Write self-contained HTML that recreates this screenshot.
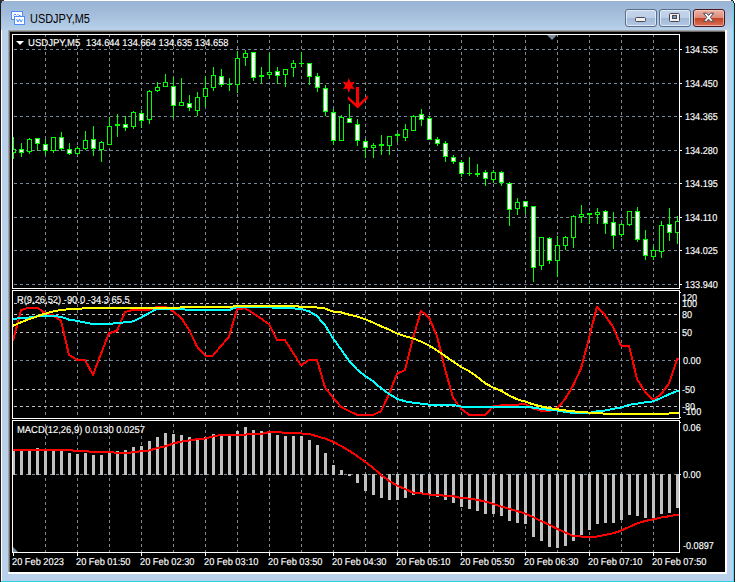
<!DOCTYPE html>
<html><head><meta charset="utf-8"><title>USDJPY,M5</title>
<style>
html,body{margin:0;padding:0;}
body{width:737px;height:582px;overflow:hidden;background:#fff;position:relative;font-family:"Liberation Sans",sans-serif;}
.abs{position:absolute;}
.t{position:absolute;color:#fff;font-size:10px;line-height:11px;height:11px;white-space:pre;transform-origin:0 0;transform:scaleX(.91);text-rendering:geometricPrecision;-webkit-text-stroke:0.15px #fff;}
#win{position:absolute;left:0;top:1px;width:735px;height:581px;background:#b9d1ea;}
#title{position:absolute;left:1px;top:0;width:733px;height:29px;background:linear-gradient(#98b3d4 0%,#a2bcda 40%,#aec7e2 75%,#b9d1ea 100%);}
.btn{position:absolute;top:8px;width:30px;height:16px;border:1px solid #5a6d8a;border-radius:3px;box-shadow:inset 0 0 0 1px rgba(235,243,252,.75);background:linear-gradient(#c3d5ec 0%,#bccfe8 48%,#a2b9d7 50%,#b3c8e3 100%);}
#close{border-color:#4b1622;box-shadow:inset 0 0 0 1px rgba(255,220,210,.55);background:linear-gradient(#eab3a6 0%,#dc8c7a 48%,#c23f1f 50%,#d9735c 100%);}
</style></head><body>
<div id="win">
 <div class="abs" style="left:0;top:0;width:1px;height:581px;background:#1c1c1c"></div>
 <div class="abs" style="left:1px;top:2px;width:1px;height:579px;background:#fff"></div>
 <div id="title"></div>
 <div class="abs" style="left:733px;top:2px;width:1px;height:579px;background:#55d3f3"></div>
 <div class="abs" style="left:734px;top:2px;width:1px;height:579px;background:#1c1c1c"></div>
 <div class="abs" style="left:1px;top:580px;width:733px;height:1px;background:#2fcfe8"></div>
 <!-- sunken edge -->
 <div class="abs" style="left:8px;top:29px;width:719px;height:544px;background:#fff"></div>
 <div class="abs" style="left:8px;top:29px;width:717px;height:542px;background:#6b6b6b"></div>
 <div class="abs" style="left:8px;top:29px;width:717px;height:1px;background:#a3a3a3"></div>
 <div class="abs" style="left:8px;top:29px;width:1px;height:542px;background:#a3a3a3"></div>
 <!-- icon -->
 <svg class="abs" style="left:10px;top:9px" width="17" height="16" viewBox="0 0 17 16">
  <rect x="1.5" y="1.5" width="11" height="8" fill="#fff" stroke="#4f8cff"/>
  <path d="M3.5 5.5 L5 4 L6.5 5.5 M7.5 4 L9 5.5 L10.5 5.5" stroke="#4f8cff" fill="none"/>
  <rect x="4.5" y="6.5" width="10" height="8" fill="#fff" stroke="#4f8cff"/>
  <path d="M6.5 9 L8 12 L9.5 9 L11 12 L12.5 9.5" stroke="#4f8cff" fill="none"/>
 </svg>
 <div class="abs" style="left:30px;top:10px;font-size:12px;line-height:16px;color:#000;transform-origin:0 0;transform:scaleX(.91);white-space:pre">USDJPY,M5</div>
 <div class="btn" style="left:625px"><div class="abs" style="left:9px;top:7px;width:9px;height:3px;background:#f4f2ee;border:1px solid #47475a;border-radius:1.5px"></div></div>
 <div class="btn" style="left:659px"><div class="abs" style="left:9px;top:3px;width:9px;height:7px;background:#f4f2ee;border:1px solid #47475a;border-radius:1.5px"></div><div class="abs" style="left:12px;top:5px;width:3px;height:2px;background:#7f98ba;border:1px solid #47475a"></div></div>
 <div class="btn" id="close" style="left:693px">
  <svg class="abs" style="left:8px;top:2px" width="14" height="12" viewBox="0 0 14 12"><path d="M1.4 1.2 L4.6 1.2 L6.55 3.5 L8.5 1.2 L11.7 1.2 L8.3 5.3 L11.7 9.4 L8.5 9.4 L6.55 7.1 L4.6 9.4 L1.4 9.4 L4.8 5.3 Z" fill="#fff" stroke="#4a4a58" stroke-width="1" stroke-linejoin="round"/></svg>
 </div>
</div>
<!-- corners -->
<div class="abs" style="left:731px;top:0;width:2px;height:1px;background:#222"></div>
<div class="abs" style="left:733px;top:1px;width:1px;height:2px;background:#222"></div>
<div class="abs" style="left:734px;top:1px;width:1px;height:2px;background:#fff"></div>
<div class="abs" style="left:0;top:0;width:4px;height:1px;background:#333"></div>
<div class="abs" style="left:0;top:1px;width:2px;height:2px;background:#333"></div>
<svg width="737" height="582" viewBox="0 0 737 582" style="position:absolute;left:0;top:0" shape-rendering="crispEdges">
<defs>
<clipPath id="cm"><rect x="13" y="35" width="666" height="253"/></clipPath>
<clipPath id="c1"><rect x="13" y="291" width="666" height="127"/></clipPath>
<clipPath id="c2"><rect x="13" y="421" width="666" height="131"/></clipPath>
</defs>
<rect x="10" y="32" width="715" height="540" fill="#000"/>
<line x1="45.5" y1="34" x2="45.5" y2="288" stroke="#778899" stroke-width="1" stroke-dasharray="3 3"/>
<line x1="45.5" y1="292" x2="45.5" y2="418" stroke="#778899" stroke-width="1" stroke-dasharray="3 3"/>
<line x1="45.5" y1="424" x2="45.5" y2="552" stroke="#778899" stroke-width="1" stroke-dasharray="3 3"/>
<line x1="77.5" y1="34" x2="77.5" y2="288" stroke="#778899" stroke-width="1" stroke-dasharray="3 3"/>
<line x1="77.5" y1="292" x2="77.5" y2="418" stroke="#778899" stroke-width="1" stroke-dasharray="3 3"/>
<line x1="77.5" y1="424" x2="77.5" y2="552" stroke="#778899" stroke-width="1" stroke-dasharray="3 3"/>
<line x1="109.5" y1="34" x2="109.5" y2="288" stroke="#778899" stroke-width="1" stroke-dasharray="3 3"/>
<line x1="109.5" y1="292" x2="109.5" y2="418" stroke="#778899" stroke-width="1" stroke-dasharray="3 3"/>
<line x1="109.5" y1="424" x2="109.5" y2="552" stroke="#778899" stroke-width="1" stroke-dasharray="3 3"/>
<line x1="141.5" y1="34" x2="141.5" y2="288" stroke="#778899" stroke-width="1" stroke-dasharray="3 3"/>
<line x1="141.5" y1="292" x2="141.5" y2="418" stroke="#778899" stroke-width="1" stroke-dasharray="3 3"/>
<line x1="141.5" y1="424" x2="141.5" y2="552" stroke="#778899" stroke-width="1" stroke-dasharray="3 3"/>
<line x1="173.5" y1="34" x2="173.5" y2="288" stroke="#778899" stroke-width="1" stroke-dasharray="3 3"/>
<line x1="173.5" y1="292" x2="173.5" y2="418" stroke="#778899" stroke-width="1" stroke-dasharray="3 3"/>
<line x1="173.5" y1="424" x2="173.5" y2="552" stroke="#778899" stroke-width="1" stroke-dasharray="3 3"/>
<line x1="205.5" y1="34" x2="205.5" y2="288" stroke="#778899" stroke-width="1" stroke-dasharray="3 3"/>
<line x1="205.5" y1="292" x2="205.5" y2="418" stroke="#778899" stroke-width="1" stroke-dasharray="3 3"/>
<line x1="205.5" y1="424" x2="205.5" y2="552" stroke="#778899" stroke-width="1" stroke-dasharray="3 3"/>
<line x1="237.5" y1="34" x2="237.5" y2="288" stroke="#778899" stroke-width="1" stroke-dasharray="3 3"/>
<line x1="237.5" y1="292" x2="237.5" y2="418" stroke="#778899" stroke-width="1" stroke-dasharray="3 3"/>
<line x1="237.5" y1="424" x2="237.5" y2="552" stroke="#778899" stroke-width="1" stroke-dasharray="3 3"/>
<line x1="269.5" y1="34" x2="269.5" y2="288" stroke="#778899" stroke-width="1" stroke-dasharray="3 3"/>
<line x1="269.5" y1="292" x2="269.5" y2="418" stroke="#778899" stroke-width="1" stroke-dasharray="3 3"/>
<line x1="269.5" y1="424" x2="269.5" y2="552" stroke="#778899" stroke-width="1" stroke-dasharray="3 3"/>
<line x1="301.5" y1="34" x2="301.5" y2="288" stroke="#778899" stroke-width="1" stroke-dasharray="3 3"/>
<line x1="301.5" y1="292" x2="301.5" y2="418" stroke="#778899" stroke-width="1" stroke-dasharray="3 3"/>
<line x1="301.5" y1="424" x2="301.5" y2="552" stroke="#778899" stroke-width="1" stroke-dasharray="3 3"/>
<line x1="333.5" y1="34" x2="333.5" y2="288" stroke="#778899" stroke-width="1" stroke-dasharray="3 3"/>
<line x1="333.5" y1="292" x2="333.5" y2="418" stroke="#778899" stroke-width="1" stroke-dasharray="3 3"/>
<line x1="333.5" y1="424" x2="333.5" y2="552" stroke="#778899" stroke-width="1" stroke-dasharray="3 3"/>
<line x1="365.5" y1="34" x2="365.5" y2="288" stroke="#778899" stroke-width="1" stroke-dasharray="3 3"/>
<line x1="365.5" y1="292" x2="365.5" y2="418" stroke="#778899" stroke-width="1" stroke-dasharray="3 3"/>
<line x1="365.5" y1="424" x2="365.5" y2="552" stroke="#778899" stroke-width="1" stroke-dasharray="3 3"/>
<line x1="397.5" y1="34" x2="397.5" y2="288" stroke="#778899" stroke-width="1" stroke-dasharray="3 3"/>
<line x1="397.5" y1="292" x2="397.5" y2="418" stroke="#778899" stroke-width="1" stroke-dasharray="3 3"/>
<line x1="397.5" y1="424" x2="397.5" y2="552" stroke="#778899" stroke-width="1" stroke-dasharray="3 3"/>
<line x1="429.5" y1="34" x2="429.5" y2="288" stroke="#778899" stroke-width="1" stroke-dasharray="3 3"/>
<line x1="429.5" y1="292" x2="429.5" y2="418" stroke="#778899" stroke-width="1" stroke-dasharray="3 3"/>
<line x1="429.5" y1="424" x2="429.5" y2="552" stroke="#778899" stroke-width="1" stroke-dasharray="3 3"/>
<line x1="461.5" y1="34" x2="461.5" y2="288" stroke="#778899" stroke-width="1" stroke-dasharray="3 3"/>
<line x1="461.5" y1="292" x2="461.5" y2="418" stroke="#778899" stroke-width="1" stroke-dasharray="3 3"/>
<line x1="461.5" y1="424" x2="461.5" y2="552" stroke="#778899" stroke-width="1" stroke-dasharray="3 3"/>
<line x1="493.5" y1="34" x2="493.5" y2="288" stroke="#778899" stroke-width="1" stroke-dasharray="3 3"/>
<line x1="493.5" y1="292" x2="493.5" y2="418" stroke="#778899" stroke-width="1" stroke-dasharray="3 3"/>
<line x1="493.5" y1="424" x2="493.5" y2="552" stroke="#778899" stroke-width="1" stroke-dasharray="3 3"/>
<line x1="525.5" y1="34" x2="525.5" y2="288" stroke="#778899" stroke-width="1" stroke-dasharray="3 3"/>
<line x1="525.5" y1="292" x2="525.5" y2="418" stroke="#778899" stroke-width="1" stroke-dasharray="3 3"/>
<line x1="525.5" y1="424" x2="525.5" y2="552" stroke="#778899" stroke-width="1" stroke-dasharray="3 3"/>
<line x1="557.5" y1="34" x2="557.5" y2="288" stroke="#778899" stroke-width="1" stroke-dasharray="3 3"/>
<line x1="557.5" y1="292" x2="557.5" y2="418" stroke="#778899" stroke-width="1" stroke-dasharray="3 3"/>
<line x1="557.5" y1="424" x2="557.5" y2="552" stroke="#778899" stroke-width="1" stroke-dasharray="3 3"/>
<line x1="589.5" y1="34" x2="589.5" y2="288" stroke="#778899" stroke-width="1" stroke-dasharray="3 3"/>
<line x1="589.5" y1="292" x2="589.5" y2="418" stroke="#778899" stroke-width="1" stroke-dasharray="3 3"/>
<line x1="589.5" y1="424" x2="589.5" y2="552" stroke="#778899" stroke-width="1" stroke-dasharray="3 3"/>
<line x1="621.5" y1="34" x2="621.5" y2="288" stroke="#778899" stroke-width="1" stroke-dasharray="3 3"/>
<line x1="621.5" y1="292" x2="621.5" y2="418" stroke="#778899" stroke-width="1" stroke-dasharray="3 3"/>
<line x1="621.5" y1="424" x2="621.5" y2="552" stroke="#778899" stroke-width="1" stroke-dasharray="3 3"/>
<line x1="653.5" y1="34" x2="653.5" y2="288" stroke="#778899" stroke-width="1" stroke-dasharray="3 3"/>
<line x1="653.5" y1="292" x2="653.5" y2="418" stroke="#778899" stroke-width="1" stroke-dasharray="3 3"/>
<line x1="653.5" y1="424" x2="653.5" y2="552" stroke="#778899" stroke-width="1" stroke-dasharray="3 3"/>
<line x1="14" y1="49.5" x2="679" y2="49.5" stroke="#778899" stroke-width="1" stroke-dasharray="3 3"/>
<rect x="680" y="49" width="2" height="1" fill="#fff"/>
<line x1="14" y1="83.5" x2="679" y2="83.5" stroke="#778899" stroke-width="1" stroke-dasharray="3 3"/>
<rect x="680" y="83" width="2" height="1" fill="#fff"/>
<line x1="14" y1="116.5" x2="679" y2="116.5" stroke="#778899" stroke-width="1" stroke-dasharray="3 3"/>
<rect x="680" y="116" width="2" height="1" fill="#fff"/>
<line x1="14" y1="150.5" x2="679" y2="150.5" stroke="#778899" stroke-width="1" stroke-dasharray="3 3"/>
<rect x="680" y="150" width="2" height="1" fill="#fff"/>
<line x1="14" y1="183.5" x2="679" y2="183.5" stroke="#778899" stroke-width="1" stroke-dasharray="3 3"/>
<rect x="680" y="183" width="2" height="1" fill="#fff"/>
<line x1="14" y1="217.5" x2="679" y2="217.5" stroke="#778899" stroke-width="1" stroke-dasharray="3 3"/>
<rect x="680" y="217" width="2" height="1" fill="#fff"/>
<line x1="14" y1="250.5" x2="679" y2="250.5" stroke="#778899" stroke-width="1" stroke-dasharray="3 3"/>
<rect x="680" y="250" width="2" height="1" fill="#fff"/>
<line x1="14" y1="284.5" x2="679" y2="284.5" stroke="#778899" stroke-width="1" stroke-dasharray="3 3"/>
<rect x="680" y="284" width="2" height="1" fill="#fff"/>
<line x1="14" y1="303.5" x2="679" y2="303.5" stroke="#c0c0c0" stroke-width="1" stroke-dasharray="3 3"/>
<line x1="14" y1="314.5" x2="679" y2="314.5" stroke="#c0c0c0" stroke-width="1" stroke-dasharray="3 3"/>
<line x1="14" y1="332.5" x2="679" y2="332.5" stroke="#c0c0c0" stroke-width="1" stroke-dasharray="3 3"/>
<line x1="14" y1="389.5" x2="679" y2="389.5" stroke="#c0c0c0" stroke-width="1" stroke-dasharray="3 3"/>
<line x1="14" y1="406.5" x2="679" y2="406.5" stroke="#c0c0c0" stroke-width="1" stroke-dasharray="3 3"/>
<line x1="14" y1="360.5" x2="679" y2="360.5" stroke="#778899" stroke-width="1" stroke-dasharray="3 3"/>
<line x1="14" y1="474.5" x2="679" y2="474.5" stroke="#778899" stroke-width="1" stroke-dasharray="3 3"/>
<g clip-path="url(#cm)">
<rect x="13" y="137" width="1" height="22" fill="#00ff00"/>
<rect x="11" y="149" width="5" height="4" fill="#00ff00"/>
<rect x="12" y="150" width="3" height="2" fill="#000"/>
<rect x="21" y="143" width="1" height="14" fill="#00ff00"/>
<rect x="19" y="149" width="5" height="4" fill="#00ff00"/>
<rect x="20" y="150" width="3" height="2" fill="#fff"/>
<rect x="29" y="138" width="1" height="16" fill="#00ff00"/>
<rect x="27" y="139" width="5" height="13" fill="#00ff00"/>
<rect x="28" y="140" width="3" height="11" fill="#000"/>
<rect x="37" y="138" width="1" height="13" fill="#00ff00"/>
<rect x="35" y="138" width="5" height="6" fill="#00ff00"/>
<rect x="36" y="139" width="3" height="4" fill="#fff"/>
<rect x="45" y="139" width="1" height="16" fill="#00ff00"/>
<rect x="43" y="144" width="5" height="7" fill="#00ff00"/>
<rect x="44" y="145" width="3" height="5" fill="#fff"/>
<rect x="53" y="137" width="1" height="16" fill="#00ff00"/>
<rect x="51" y="137" width="5" height="14" fill="#00ff00"/>
<rect x="52" y="138" width="3" height="12" fill="#000"/>
<rect x="61" y="132" width="1" height="19" fill="#00ff00"/>
<rect x="59" y="137" width="5" height="12" fill="#00ff00"/>
<rect x="60" y="138" width="3" height="10" fill="#fff"/>
<rect x="69" y="143" width="1" height="12" fill="#00ff00"/>
<rect x="67" y="149" width="5" height="5" fill="#00ff00"/>
<rect x="68" y="150" width="3" height="3" fill="#fff"/>
<rect x="77" y="146" width="1" height="9" fill="#00ff00"/>
<rect x="75" y="148" width="5" height="6" fill="#00ff00"/>
<rect x="76" y="149" width="3" height="4" fill="#000"/>
<rect x="85" y="131" width="1" height="19" fill="#00ff00"/>
<rect x="83" y="140" width="5" height="9" fill="#00ff00"/>
<rect x="84" y="141" width="3" height="7" fill="#000"/>
<rect x="93" y="126" width="1" height="30" fill="#00ff00"/>
<rect x="91" y="139" width="5" height="10" fill="#00ff00"/>
<rect x="92" y="140" width="3" height="8" fill="#fff"/>
<rect x="101" y="141" width="1" height="21" fill="#00ff00"/>
<rect x="99" y="142" width="5" height="8" fill="#00ff00"/>
<rect x="100" y="143" width="3" height="6" fill="#000"/>
<rect x="109" y="117" width="1" height="28" fill="#00ff00"/>
<rect x="107" y="126" width="5" height="19" fill="#00ff00"/>
<rect x="108" y="127" width="3" height="17" fill="#000"/>
<rect x="117" y="114" width="1" height="23" fill="#00ff00"/>
<rect x="115" y="124" width="5" height="2" fill="#00ff00"/>
<rect x="125" y="116" width="1" height="15" fill="#00ff00"/>
<rect x="123" y="124" width="5" height="4" fill="#00ff00"/>
<rect x="124" y="125" width="3" height="2" fill="#fff"/>
<rect x="133" y="111" width="1" height="18" fill="#00ff00"/>
<rect x="131" y="112" width="5" height="15" fill="#00ff00"/>
<rect x="132" y="113" width="3" height="13" fill="#000"/>
<rect x="141" y="110" width="1" height="18" fill="#00ff00"/>
<rect x="139" y="113" width="5" height="8" fill="#00ff00"/>
<rect x="140" y="114" width="3" height="6" fill="#fff"/>
<rect x="149" y="90" width="1" height="34" fill="#00ff00"/>
<rect x="147" y="91" width="5" height="29" fill="#00ff00"/>
<rect x="148" y="92" width="3" height="27" fill="#000"/>
<rect x="157" y="82" width="1" height="10" fill="#00ff00"/>
<rect x="155" y="87" width="5" height="4" fill="#00ff00"/>
<rect x="156" y="88" width="3" height="2" fill="#000"/>
<rect x="165" y="74" width="1" height="13" fill="#00ff00"/>
<rect x="163" y="82" width="5" height="5" fill="#00ff00"/>
<rect x="164" y="83" width="3" height="3" fill="#000"/>
<rect x="173" y="77" width="1" height="41" fill="#00ff00"/>
<rect x="171" y="86" width="5" height="20" fill="#00ff00"/>
<rect x="172" y="87" width="3" height="18" fill="#fff"/>
<rect x="181" y="78" width="1" height="28" fill="#00ff00"/>
<rect x="179" y="102" width="5" height="4" fill="#00ff00"/>
<rect x="180" y="103" width="3" height="2" fill="#000"/>
<rect x="189" y="95" width="1" height="16" fill="#00ff00"/>
<rect x="187" y="103" width="5" height="5" fill="#00ff00"/>
<rect x="188" y="104" width="3" height="3" fill="#fff"/>
<rect x="197" y="92" width="1" height="24" fill="#00ff00"/>
<rect x="195" y="97" width="5" height="14" fill="#00ff00"/>
<rect x="196" y="98" width="3" height="12" fill="#000"/>
<rect x="205" y="76" width="1" height="31" fill="#00ff00"/>
<rect x="203" y="88" width="5" height="9" fill="#00ff00"/>
<rect x="204" y="89" width="3" height="7" fill="#000"/>
<rect x="213" y="67" width="1" height="24" fill="#00ff00"/>
<rect x="211" y="75" width="5" height="13" fill="#00ff00"/>
<rect x="212" y="76" width="3" height="11" fill="#000"/>
<rect x="221" y="69" width="1" height="18" fill="#00ff00"/>
<rect x="219" y="76" width="5" height="9" fill="#00ff00"/>
<rect x="220" y="77" width="3" height="7" fill="#fff"/>
<rect x="229" y="78" width="1" height="13" fill="#00ff00"/>
<rect x="227" y="84" width="5" height="1" fill="#00ff00"/>
<rect x="237" y="51" width="1" height="42" fill="#00ff00"/>
<rect x="235" y="58" width="5" height="27" fill="#00ff00"/>
<rect x="236" y="59" width="3" height="25" fill="#000"/>
<rect x="245" y="50" width="1" height="16" fill="#00ff00"/>
<rect x="243" y="53" width="5" height="5" fill="#00ff00"/>
<rect x="244" y="54" width="3" height="3" fill="#000"/>
<rect x="253" y="52" width="1" height="29" fill="#00ff00"/>
<rect x="251" y="52" width="5" height="26" fill="#00ff00"/>
<rect x="252" y="53" width="3" height="24" fill="#fff"/>
<rect x="261" y="67" width="1" height="16" fill="#00ff00"/>
<rect x="259" y="75" width="5" height="2" fill="#00ff00"/>
<rect x="269" y="53" width="1" height="26" fill="#00ff00"/>
<rect x="267" y="72" width="5" height="3" fill="#00ff00"/>
<rect x="268" y="73" width="3" height="1" fill="#000"/>
<rect x="277" y="67" width="1" height="17" fill="#00ff00"/>
<rect x="275" y="71" width="5" height="5" fill="#00ff00"/>
<rect x="276" y="72" width="3" height="3" fill="#fff"/>
<rect x="285" y="69" width="1" height="18" fill="#00ff00"/>
<rect x="283" y="69" width="5" height="6" fill="#00ff00"/>
<rect x="284" y="70" width="3" height="4" fill="#000"/>
<rect x="293" y="60" width="1" height="17" fill="#00ff00"/>
<rect x="291" y="63" width="5" height="5" fill="#00ff00"/>
<rect x="292" y="64" width="3" height="3" fill="#000"/>
<rect x="301" y="52" width="1" height="15" fill="#00ff00"/>
<rect x="299" y="63" width="5" height="1" fill="#00ff00"/>
<rect x="309" y="63" width="1" height="22" fill="#00ff00"/>
<rect x="307" y="63" width="5" height="14" fill="#00ff00"/>
<rect x="308" y="64" width="3" height="12" fill="#fff"/>
<rect x="317" y="73" width="1" height="19" fill="#00ff00"/>
<rect x="315" y="76" width="5" height="12" fill="#00ff00"/>
<rect x="316" y="77" width="3" height="10" fill="#fff"/>
<rect x="325" y="85" width="1" height="31" fill="#00ff00"/>
<rect x="323" y="88" width="5" height="24" fill="#00ff00"/>
<rect x="324" y="89" width="3" height="22" fill="#fff"/>
<rect x="333" y="109" width="1" height="36" fill="#00ff00"/>
<rect x="331" y="112" width="5" height="29" fill="#00ff00"/>
<rect x="332" y="113" width="3" height="27" fill="#fff"/>
<rect x="341" y="115" width="1" height="26" fill="#00ff00"/>
<rect x="339" y="117" width="5" height="24" fill="#00ff00"/>
<rect x="340" y="118" width="3" height="22" fill="#000"/>
<rect x="349" y="104" width="1" height="19" fill="#00ff00"/>
<rect x="347" y="118" width="5" height="5" fill="#00ff00"/>
<rect x="348" y="119" width="3" height="3" fill="#fff"/>
<rect x="357" y="119" width="1" height="27" fill="#00ff00"/>
<rect x="355" y="124" width="5" height="17" fill="#00ff00"/>
<rect x="356" y="125" width="3" height="15" fill="#fff"/>
<rect x="365" y="139" width="1" height="19" fill="#00ff00"/>
<rect x="363" y="141" width="5" height="7" fill="#00ff00"/>
<rect x="364" y="142" width="3" height="5" fill="#fff"/>
<rect x="373" y="143" width="1" height="15" fill="#00ff00"/>
<rect x="371" y="145" width="5" height="3" fill="#00ff00"/>
<rect x="372" y="146" width="3" height="1" fill="#000"/>
<rect x="381" y="135" width="1" height="20" fill="#00ff00"/>
<rect x="379" y="144" width="5" height="2" fill="#00ff00"/>
<rect x="389" y="136" width="1" height="19" fill="#00ff00"/>
<rect x="387" y="136" width="5" height="10" fill="#00ff00"/>
<rect x="388" y="137" width="3" height="8" fill="#000"/>
<rect x="397" y="133" width="1" height="9" fill="#00ff00"/>
<rect x="395" y="134" width="5" height="2" fill="#00ff00"/>
<rect x="405" y="124" width="1" height="17" fill="#00ff00"/>
<rect x="403" y="129" width="5" height="9" fill="#00ff00"/>
<rect x="404" y="130" width="3" height="7" fill="#000"/>
<rect x="413" y="115" width="1" height="16" fill="#00ff00"/>
<rect x="411" y="116" width="5" height="15" fill="#00ff00"/>
<rect x="412" y="117" width="3" height="13" fill="#000"/>
<rect x="421" y="109" width="1" height="17" fill="#00ff00"/>
<rect x="419" y="114" width="5" height="6" fill="#00ff00"/>
<rect x="420" y="115" width="3" height="4" fill="#fff"/>
<rect x="429" y="116" width="1" height="24" fill="#00ff00"/>
<rect x="427" y="118" width="5" height="22" fill="#00ff00"/>
<rect x="428" y="119" width="3" height="20" fill="#fff"/>
<rect x="437" y="137" width="1" height="9" fill="#00ff00"/>
<rect x="435" y="139" width="5" height="5" fill="#00ff00"/>
<rect x="436" y="140" width="3" height="3" fill="#fff"/>
<rect x="445" y="141" width="1" height="21" fill="#00ff00"/>
<rect x="443" y="143" width="5" height="14" fill="#00ff00"/>
<rect x="444" y="144" width="3" height="12" fill="#fff"/>
<rect x="453" y="155" width="1" height="9" fill="#00ff00"/>
<rect x="451" y="157" width="5" height="5" fill="#00ff00"/>
<rect x="452" y="158" width="3" height="3" fill="#fff"/>
<rect x="461" y="160" width="1" height="17" fill="#00ff00"/>
<rect x="459" y="162" width="5" height="12" fill="#00ff00"/>
<rect x="460" y="163" width="3" height="10" fill="#fff"/>
<rect x="469" y="157" width="1" height="19" fill="#00ff00"/>
<rect x="467" y="173" width="5" height="1" fill="#00ff00"/>
<rect x="477" y="164" width="1" height="13" fill="#00ff00"/>
<rect x="475" y="173" width="5" height="2" fill="#00ff00"/>
<rect x="485" y="170" width="1" height="16" fill="#00ff00"/>
<rect x="483" y="172" width="5" height="7" fill="#00ff00"/>
<rect x="484" y="173" width="3" height="5" fill="#fff"/>
<rect x="493" y="170" width="1" height="13" fill="#00ff00"/>
<rect x="491" y="172" width="5" height="8" fill="#00ff00"/>
<rect x="492" y="173" width="3" height="6" fill="#000"/>
<rect x="501" y="171" width="1" height="15" fill="#00ff00"/>
<rect x="499" y="172" width="5" height="11" fill="#00ff00"/>
<rect x="500" y="173" width="3" height="9" fill="#fff"/>
<rect x="509" y="182" width="1" height="44" fill="#00ff00"/>
<rect x="507" y="183" width="5" height="27" fill="#00ff00"/>
<rect x="508" y="184" width="3" height="25" fill="#fff"/>
<rect x="517" y="198" width="1" height="17" fill="#00ff00"/>
<rect x="515" y="202" width="5" height="7" fill="#00ff00"/>
<rect x="516" y="203" width="3" height="5" fill="#000"/>
<rect x="525" y="201" width="1" height="13" fill="#00ff00"/>
<rect x="523" y="201" width="5" height="6" fill="#00ff00"/>
<rect x="524" y="202" width="3" height="4" fill="#fff"/>
<rect x="533" y="206" width="1" height="76" fill="#00ff00"/>
<rect x="531" y="206" width="5" height="62" fill="#00ff00"/>
<rect x="532" y="207" width="3" height="60" fill="#fff"/>
<rect x="541" y="237" width="1" height="33" fill="#00ff00"/>
<rect x="539" y="237" width="5" height="29" fill="#00ff00"/>
<rect x="540" y="238" width="3" height="27" fill="#000"/>
<rect x="549" y="237" width="1" height="27" fill="#00ff00"/>
<rect x="547" y="238" width="5" height="23" fill="#00ff00"/>
<rect x="548" y="239" width="3" height="21" fill="#fff"/>
<rect x="557" y="236" width="1" height="41" fill="#00ff00"/>
<rect x="555" y="245" width="5" height="16" fill="#00ff00"/>
<rect x="556" y="246" width="3" height="14" fill="#000"/>
<rect x="565" y="236" width="1" height="14" fill="#00ff00"/>
<rect x="563" y="237" width="5" height="9" fill="#00ff00"/>
<rect x="564" y="238" width="3" height="7" fill="#000"/>
<rect x="573" y="215" width="1" height="33" fill="#00ff00"/>
<rect x="571" y="216" width="5" height="22" fill="#00ff00"/>
<rect x="572" y="217" width="3" height="20" fill="#000"/>
<rect x="581" y="205" width="1" height="18" fill="#00ff00"/>
<rect x="579" y="214" width="5" height="3" fill="#00ff00"/>
<rect x="580" y="215" width="3" height="1" fill="#000"/>
<rect x="589" y="213" width="1" height="11" fill="#00ff00"/>
<rect x="587" y="213" width="5" height="2" fill="#00ff00"/>
<rect x="597" y="208" width="1" height="16" fill="#00ff00"/>
<rect x="595" y="212" width="5" height="3" fill="#00ff00"/>
<rect x="596" y="213" width="3" height="1" fill="#000"/>
<rect x="605" y="210" width="1" height="24" fill="#00ff00"/>
<rect x="603" y="211" width="5" height="13" fill="#00ff00"/>
<rect x="604" y="212" width="3" height="11" fill="#fff"/>
<rect x="613" y="212" width="1" height="37" fill="#00ff00"/>
<rect x="611" y="222" width="5" height="14" fill="#00ff00"/>
<rect x="612" y="223" width="3" height="12" fill="#fff"/>
<rect x="621" y="223" width="1" height="14" fill="#00ff00"/>
<rect x="619" y="224" width="5" height="11" fill="#00ff00"/>
<rect x="620" y="225" width="3" height="9" fill="#000"/>
<rect x="629" y="211" width="1" height="15" fill="#00ff00"/>
<rect x="627" y="211" width="5" height="14" fill="#00ff00"/>
<rect x="628" y="212" width="3" height="12" fill="#000"/>
<rect x="637" y="207" width="1" height="35" fill="#00ff00"/>
<rect x="635" y="211" width="5" height="29" fill="#00ff00"/>
<rect x="636" y="212" width="3" height="27" fill="#fff"/>
<rect x="645" y="230" width="1" height="30" fill="#00ff00"/>
<rect x="643" y="239" width="5" height="17" fill="#00ff00"/>
<rect x="644" y="240" width="3" height="15" fill="#fff"/>
<rect x="653" y="246" width="1" height="14" fill="#00ff00"/>
<rect x="651" y="250" width="5" height="7" fill="#00ff00"/>
<rect x="652" y="251" width="3" height="5" fill="#000"/>
<rect x="661" y="221" width="1" height="37" fill="#00ff00"/>
<rect x="659" y="225" width="5" height="27" fill="#00ff00"/>
<rect x="660" y="226" width="3" height="25" fill="#000"/>
<rect x="669" y="208" width="1" height="33" fill="#00ff00"/>
<rect x="667" y="224" width="5" height="9" fill="#00ff00"/>
<rect x="668" y="225" width="3" height="7" fill="#fff"/>
<rect x="677" y="216" width="1" height="28" fill="#00ff00"/>
<rect x="675" y="221" width="5" height="12" fill="#00ff00"/>
<rect x="676" y="222" width="3" height="10" fill="#000"/>
</g>
<g clip-path="url(#c2)">
<rect x="12" y="450" width="3" height="25" fill="#c0c0c0"/>
<rect x="20" y="450" width="3" height="25" fill="#c0c0c0"/>
<rect x="28" y="450" width="3" height="25" fill="#c0c0c0"/>
<rect x="36" y="448" width="3" height="27" fill="#c0c0c0"/>
<rect x="44" y="450" width="3" height="25" fill="#c0c0c0"/>
<rect x="52" y="450" width="3" height="25" fill="#c0c0c0"/>
<rect x="60" y="451" width="3" height="24" fill="#c0c0c0"/>
<rect x="68" y="453" width="3" height="22" fill="#c0c0c0"/>
<rect x="76" y="454" width="3" height="21" fill="#c0c0c0"/>
<rect x="84" y="453" width="3" height="22" fill="#c0c0c0"/>
<rect x="92" y="455" width="3" height="20" fill="#c0c0c0"/>
<rect x="100" y="455" width="3" height="20" fill="#c0c0c0"/>
<rect x="108" y="452" width="3" height="23" fill="#c0c0c0"/>
<rect x="116" y="451" width="3" height="24" fill="#c0c0c0"/>
<rect x="124" y="450" width="3" height="25" fill="#c0c0c0"/>
<rect x="132" y="447" width="3" height="28" fill="#c0c0c0"/>
<rect x="140" y="446" width="3" height="29" fill="#c0c0c0"/>
<rect x="148" y="441" width="3" height="34" fill="#c0c0c0"/>
<rect x="156" y="437" width="3" height="38" fill="#c0c0c0"/>
<rect x="164" y="433" width="3" height="42" fill="#c0c0c0"/>
<rect x="172" y="434" width="3" height="41" fill="#c0c0c0"/>
<rect x="180" y="435" width="3" height="40" fill="#c0c0c0"/>
<rect x="188" y="437" width="3" height="38" fill="#c0c0c0"/>
<rect x="196" y="439" width="3" height="36" fill="#c0c0c0"/>
<rect x="204" y="437" width="3" height="38" fill="#c0c0c0"/>
<rect x="212" y="434" width="3" height="41" fill="#c0c0c0"/>
<rect x="220" y="434" width="3" height="41" fill="#c0c0c0"/>
<rect x="228" y="435" width="3" height="40" fill="#c0c0c0"/>
<rect x="236" y="431" width="3" height="44" fill="#c0c0c0"/>
<rect x="244" y="427" width="3" height="48" fill="#c0c0c0"/>
<rect x="252" y="430" width="3" height="45" fill="#c0c0c0"/>
<rect x="260" y="431" width="3" height="44" fill="#c0c0c0"/>
<rect x="268" y="431" width="3" height="44" fill="#c0c0c0"/>
<rect x="276" y="435" width="3" height="40" fill="#c0c0c0"/>
<rect x="284" y="436" width="3" height="39" fill="#c0c0c0"/>
<rect x="292" y="436" width="3" height="39" fill="#c0c0c0"/>
<rect x="300" y="436" width="3" height="39" fill="#c0c0c0"/>
<rect x="308" y="440" width="3" height="35" fill="#c0c0c0"/>
<rect x="316" y="445" width="3" height="30" fill="#c0c0c0"/>
<rect x="324" y="453" width="3" height="22" fill="#c0c0c0"/>
<rect x="332" y="465" width="3" height="10" fill="#c0c0c0"/>
<rect x="340" y="470" width="3" height="5" fill="#c0c0c0"/>
<rect x="348" y="474" width="3" height="2" fill="#c0c0c0"/>
<rect x="356" y="474" width="3" height="9" fill="#c0c0c0"/>
<rect x="364" y="474" width="3" height="17" fill="#c0c0c0"/>
<rect x="372" y="474" width="3" height="21" fill="#c0c0c0"/>
<rect x="380" y="474" width="3" height="24" fill="#c0c0c0"/>
<rect x="388" y="474" width="3" height="26" fill="#c0c0c0"/>
<rect x="396" y="474" width="3" height="26" fill="#c0c0c0"/>
<rect x="404" y="474" width="3" height="24" fill="#c0c0c0"/>
<rect x="412" y="474" width="3" height="21" fill="#c0c0c0"/>
<rect x="420" y="474" width="3" height="19" fill="#c0c0c0"/>
<rect x="428" y="474" width="3" height="21" fill="#c0c0c0"/>
<rect x="436" y="474" width="3" height="23" fill="#c0c0c0"/>
<rect x="444" y="474" width="3" height="26" fill="#c0c0c0"/>
<rect x="452" y="474" width="3" height="29" fill="#c0c0c0"/>
<rect x="460" y="474" width="3" height="33" fill="#c0c0c0"/>
<rect x="468" y="474" width="3" height="35" fill="#c0c0c0"/>
<rect x="476" y="474" width="3" height="37" fill="#c0c0c0"/>
<rect x="484" y="474" width="3" height="40" fill="#c0c0c0"/>
<rect x="492" y="474" width="3" height="40" fill="#c0c0c0"/>
<rect x="500" y="474" width="3" height="42" fill="#c0c0c0"/>
<rect x="508" y="474" width="3" height="47" fill="#c0c0c0"/>
<rect x="516" y="474" width="3" height="49" fill="#c0c0c0"/>
<rect x="524" y="474" width="3" height="50" fill="#c0c0c0"/>
<rect x="532" y="474" width="3" height="63" fill="#c0c0c0"/>
<rect x="540" y="474" width="3" height="67" fill="#c0c0c0"/>
<rect x="548" y="474" width="3" height="73" fill="#c0c0c0"/>
<rect x="556" y="474" width="3" height="74" fill="#c0c0c0"/>
<rect x="564" y="474" width="3" height="72" fill="#c0c0c0"/>
<rect x="572" y="474" width="3" height="67" fill="#c0c0c0"/>
<rect x="580" y="474" width="3" height="61" fill="#c0c0c0"/>
<rect x="588" y="474" width="3" height="56" fill="#c0c0c0"/>
<rect x="596" y="474" width="3" height="50" fill="#c0c0c0"/>
<rect x="604" y="474" width="3" height="49" fill="#c0c0c0"/>
<rect x="612" y="474" width="3" height="49" fill="#c0c0c0"/>
<rect x="620" y="474" width="3" height="46" fill="#c0c0c0"/>
<rect x="628" y="474" width="3" height="41" fill="#c0c0c0"/>
<rect x="636" y="474" width="3" height="42" fill="#c0c0c0"/>
<rect x="644" y="474" width="3" height="44" fill="#c0c0c0"/>
<rect x="652" y="474" width="3" height="44" fill="#c0c0c0"/>
<rect x="660" y="474" width="3" height="40" fill="#c0c0c0"/>
<rect x="668" y="474" width="3" height="39" fill="#c0c0c0"/>
<rect x="676" y="474" width="3" height="34" fill="#c0c0c0"/>
<polyline points="13,450.0 21,450.0 29,450.0 37,450.0 45,450.0 53,450.0 61,450.0 69,450.0 77,451.0 85,451.0 93,452.0 101,452.0 109,452.0 117,452.8 125,452.8 133,452.4 141,451.2 149,450.5 157,448.3 165,446.4 173,443.6 181,441.7 189,440.5 197,439.3 205,438.6 213,436.5 221,435.0 229,435.0 237,434.6 245,434.6 253,433.9 261,433.9 269,432.2 277,432.2 285,432.7 293,433.0 301,433.4 309,434.0 317,436.2 325,438.6 333,441.7 341,446.0 349,450.7 357,455.9 365,461.8 373,467.8 381,474.9 389,480.8 397,485.5 405,489.0 413,492.6 421,493.4 429,494.5 437,495.0 445,495.7 453,496.2 461,497.9 469,498.6 477,499.8 485,501.4 493,503.8 501,506.4 509,508.8 517,511.0 525,513.5 533,517.0 541,521.0 549,524.6 557,528.7 565,532.5 573,535.8 581,536.5 589,536.5 597,536.5 605,534.8 613,533.4 621,530.6 629,527.0 637,523.5 645,521.0 653,519.4 661,517.5 669,516.3 677,514.7 679,514.7" fill="none" stroke="#ff0000" stroke-width="2" stroke-linejoin="round"/>
</g>
<g clip-path="url(#c1)">
<polyline points="13,341.0 21,310.2 29,307.6 37,307.6 45,313.0 53,315.3 61,320.8 69,354.8 77,359.9 85,359.9 93,375.0 101,353.7 109,333.3 117,330.7 125,312.0 133,309.8 141,309.8 149,309.8 157,307.0 165,306.5 173,311.3 181,317.5 189,329.6 197,346.5 205,355.5 213,355.5 221,346.0 229,336.7 237,309.3 245,308.2 253,313.0 261,318.6 269,324.2 277,340.0 285,340.0 293,352.6 301,365.4 309,359.9 317,359.9 325,387.3 333,397.7 341,406.8 349,411.0 357,414.7 365,414.9 373,414.9 381,411.2 389,394.3 397,373.5 405,370.2 413,338.4 421,310.9 429,317.5 437,336.2 445,369.0 453,397.7 461,408.7 469,414.9 477,414.9 485,414.9 493,406.5 501,405.4 509,405.4 517,404.7 525,403.9 533,408.4 541,410.8 549,411.2 557,408.2 565,399.3 573,385.6 581,368.5 589,338.4 597,306.5 605,315.3 613,326.8 621,345.6 629,345.6 637,379.0 645,391.8 653,400.0 661,394.4 669,383.4 677,359.2 679,359.2" fill="none" stroke="#ff0000" stroke-width="2" stroke-linejoin="round"/>
<polyline points="13,319.0 21,318.0 29,317.5 37,316.4 45,316.0 53,316.0 61,316.8 69,319.7 77,320.8 85,322.5 93,324.0 101,324.0 109,324.0 117,323.0 125,322.3 133,321.4 141,317.5 149,313.0 157,308.7 165,309.1 173,309.1 181,309.0 189,310.0 197,310.0 205,310.0 213,310.0 221,310.0 229,310.0 237,307.2 245,307.2 253,307.2 261,307.2 269,307.2 277,308.1 285,308.1 293,308.3 301,309.0 309,311.3 317,316.1 325,325.3 333,338.2 341,349.3 349,360.8 357,369.5 365,375.8 373,381.3 381,388.2 389,393.8 397,398.8 405,401.3 413,402.7 421,403.6 429,404.7 437,404.7 445,405.0 453,405.0 461,406.5 469,406.5 477,406.5 485,406.5 493,406.5 501,406.5 509,406.5 517,406.5 525,406.5 533,407.6 541,408.9 549,409.9 557,410.5 565,411.8 573,412.9 581,413.2 589,412.9 597,411.4 605,410.5 613,408.8 621,407.6 629,404.8 637,403.7 645,402.3 653,401.4 661,398.0 669,394.3 677,391.0 679,391.0" fill="none" stroke="#00ffff" stroke-width="2" stroke-linejoin="round"/>
<polyline points="13,325.8 21,322.3 29,319.2 37,316.4 45,313.7 53,311.5 61,309.8 69,309.3 77,309.0 85,308.2 93,308.2 101,308.2 109,308.2 117,308.2 125,308.2 133,308.2 141,308.2 149,308.2 157,308.2 165,308.2 173,308.2 181,307.4 189,307.0 197,307.0 205,307.0 213,307.0 221,307.0 229,307.0 237,306.1 245,306.1 253,306.1 261,306.1 269,306.1 277,306.1 285,306.1 293,306.1 301,306.7 309,307.0 317,307.5 325,308.5 333,311.6 341,312.4 349,314.6 357,316.4 365,319.2 373,322.5 381,326.3 389,329.6 397,333.5 405,336.2 413,338.4 421,341.6 429,345.4 437,350.4 445,356.0 453,361.4 461,367.0 469,370.9 477,376.8 485,383.1 493,387.5 501,390.7 509,395.5 517,399.2 525,401.6 533,404.3 541,406.4 549,408.0 557,409.3 565,410.4 573,411.3 581,412.0 589,412.6 597,413.0 605,413.7 613,414.2 621,414.2 629,414.2 637,414.2 645,414.2 653,414.2 661,414.2 669,413.5 677,412.6 679,412.6" fill="none" stroke="#ffff00" stroke-width="2" stroke-linejoin="round"/>
</g>
<rect x="12" y="34" width="668" height="1" fill="#fff"/><rect x="12" y="288" width="668" height="1" fill="#fff"/><rect x="12" y="34" width="1" height="255" fill="#fff"/><rect x="679" y="34" width="1" height="255" fill="#fff"/>
<rect x="12" y="290" width="668" height="1" fill="#fff"/><rect x="12" y="418" width="668" height="1" fill="#fff"/><rect x="12" y="290" width="1" height="129" fill="#fff"/><rect x="679" y="290" width="1" height="129" fill="#fff"/>
<rect x="12" y="420" width="668" height="1" fill="#fff"/><rect x="12" y="552" width="668" height="1" fill="#fff"/><rect x="12" y="420" width="1" height="133" fill="#fff"/><rect x="679" y="420" width="1" height="133" fill="#fff"/>
<rect x="680" y="292" width="1" height="1" fill="#fff"/>
<rect x="680" y="417" width="1" height="1" fill="#fff"/>
<rect x="680" y="422" width="1" height="1" fill="#fff"/>
<rect x="680" y="474" width="1" height="1" fill="#fff"/>
<rect x="13" y="553" width="1" height="3" fill="#fff"/>
<rect x="77" y="553" width="1" height="3" fill="#fff"/>
<rect x="141" y="553" width="1" height="3" fill="#fff"/>
<rect x="205" y="553" width="1" height="3" fill="#fff"/>
<rect x="269" y="553" width="1" height="3" fill="#fff"/>
<rect x="333" y="553" width="1" height="3" fill="#fff"/>
<rect x="397" y="553" width="1" height="3" fill="#fff"/>
<rect x="461" y="553" width="1" height="3" fill="#fff"/>
<rect x="525" y="553" width="1" height="3" fill="#fff"/>
<rect x="589" y="553" width="1" height="3" fill="#fff"/>
<rect x="653" y="553" width="1" height="3" fill="#fff"/>
<polygon points="13,547 13,552 18,552" fill="#778899" shape-rendering="auto"/>
<polygon points="547,35 557,35 552,40" fill="#778899" shape-rendering="auto"/>
<polygon points="16,41 24,41 20,45" fill="#fff" shape-rendering="auto"/>
<polygon points="348.8,78.1 350.5,82.6 354.8,81.8 352.2,85.5 354.8,89.2 350.5,88.4 348.8,92.9 347.1,88.4 342.8,89.2 345.4,85.5 342.8,81.8 347.1,82.6" fill="#ff0000" shape-rendering="auto"/>
<rect x="356" y="87" width="3" height="19" fill="#ff0000"/>
<polygon points="347.8,95.9 357.6,105 367.7,95.2 367.7,98.4 357.6,108.4 347.8,99.2" fill="#ff0000" shape-rendering="auto"/>
</svg>
<div class="t" style="left:685.0px;top:45.0px">134.535</div>
<div class="t" style="left:685.0px;top:79.0px">134.450</div>
<div class="t" style="left:685.0px;top:112.0px">134.365</div>
<div class="t" style="left:685.0px;top:146.0px">134.280</div>
<div class="t" style="left:685.0px;top:179.0px">134.195</div>
<div class="t" style="left:685.0px;top:213.0px">134.110</div>
<div class="t" style="left:685.0px;top:246.0px">134.025</div>
<div class="t" style="left:685.0px;top:280.0px">133.940</div>
<div class="t" style="left:682.0px;top:293.0px">120</div>
<div class="t" style="left:682.0px;top:299.0px">100</div>
<div class="t" style="left:682.0px;top:310.0px">80</div>
<div class="t" style="left:682.0px;top:328.0px">50</div>
<div class="t" style="left:682.0px;top:385.0px">-50</div>
<div class="t" style="left:682.0px;top:402.0px">-80</div>
<div class="t" style="left:683.0px;top:356.0px">0.00</div>
<div class="t" style="left:683.0px;top:407.0px">-100</div>
<div class="t" style="left:682.5px;top:423.0px">0.06</div>
<div class="t" style="left:682.5px;top:470.0px">0.00</div>
<div class="t" style="left:682.5px;top:541.0px">-0.0897</div>
<div class="t" style="left:12.0px;top:557.0px;transform:scaleX(0.925)">20 Feb 2023</div>
<div class="t" style="left:76.0px;top:557.0px;transform:scaleX(0.925)">20 Feb 01:50</div>
<div class="t" style="left:140.0px;top:557.0px;transform:scaleX(0.925)">20 Feb 02:30</div>
<div class="t" style="left:204.0px;top:557.0px;transform:scaleX(0.925)">20 Feb 03:10</div>
<div class="t" style="left:268.0px;top:557.0px;transform:scaleX(0.925)">20 Feb 03:50</div>
<div class="t" style="left:332.0px;top:557.0px;transform:scaleX(0.925)">20 Feb 04:30</div>
<div class="t" style="left:396.0px;top:557.0px;transform:scaleX(0.925)">20 Feb 05:10</div>
<div class="t" style="left:460.0px;top:557.0px;transform:scaleX(0.925)">20 Feb 05:50</div>
<div class="t" style="left:524.0px;top:557.0px;transform:scaleX(0.925)">20 Feb 06:30</div>
<div class="t" style="left:588.0px;top:557.0px;transform:scaleX(0.925)">20 Feb 07:10</div>
<div class="t" style="left:652.0px;top:557.0px;transform:scaleX(0.925)">20 Feb 07:50</div>
<div class="t" style="left:27.5px;top:38.0px;transform:scaleX(0.955)">USDJPY,M5</div>
<div class="t" style="left:85.6px;top:38.0px;transform:scaleX(0.932)">134.644 134.664 134.635 134.658</div>
<div class="t" style="left:16.5px;top:295.0px;transform:scaleX(0.935)">R(9,26,52) -90.0 -34.3 65.5</div>
<div class="t" style="left:16.6px;top:425.0px;transform:scaleX(0.94)">MACD(12,26,9) 0.0130 0.0257</div>
</body></html>
